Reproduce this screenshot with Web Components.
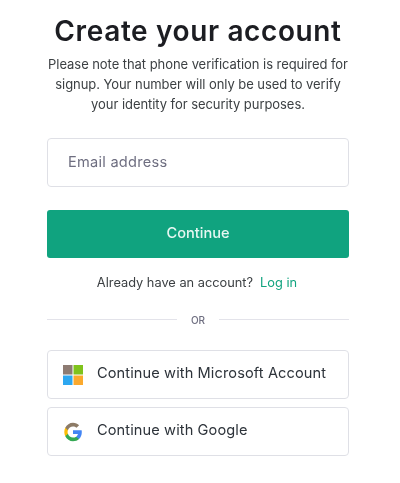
<!DOCTYPE html>
<html lang="en"><head><meta charset="utf-8"><title>Create your account</title>
<style>
html,body{margin:0;padding:0;background:#fff;}
body{font-family:Inter,"Liberation Sans",sans-serif;}
</style></head><body>
<signup-page>
  <auth-header title="Create your account">Please note that phone verification is required for<br>signup. Your number will only be used to verify<br>your identity for security purposes.</auth-header>
  <email-field placeholder="Email address"></email-field>
  <primary-button>Continue</primary-button>
  <login-prompt></login-prompt>
  <or-divider></or-divider>
  <social-button><svg slot="icon" width="20" height="20" viewBox="0 0 20 20"><rect x="0" y="0" width="9.5" height="9.5" fill="#8d7b72"/><rect x="10.5" y="0" width="9.5" height="9.5" fill="#7fc31c"/><rect x="0" y="10.5" width="9.5" height="9.5" fill="#2da7f0"/><rect x="10.5" y="10.5" width="9.5" height="9.5" fill="#fba92d"/></svg>Continue with Microsoft Account</social-button>
  <social-button><svg slot="icon" width="20" height="20" viewBox="0 0 48 48"><path fill="#4285F4" d="M45.1 24.5c0-1.6-.1-3.100-.4-4.500H24v8.500h11.800c-.5 2.750-2.050 5.100-4.400 6.650v5.550h7.100c4.150-3.800 6.600-9.450 6.600-16.200z"/><path fill="#34A853" d="M24 46c5.950 0 10.950-1.950 14.500-5.300l-7.100-5.550c-1.950 1.300-4.450 2.100-7.400 2.100-5.700 0-10.550-3.850-12.300-9H5.400v5.700C8.950 41.050 15.900 46 24 46z"/><path fill="#FBBC05" d="M11.700 28.250c-.45-1.300-.7-2.750-.7-4.250s.25-2.950.7-4.250v-5.700H5.400C3.950 16.850 3.100 20.300 3.100 24s.85 7.150 2.300 9.950z"/><path fill="#8d7b66" d="M24 10.750c3.200 0 6.050 1.100 8.350 3.250l6.300-6.300C34.950 4.200 29.950 2 24 2 15.900 2 8.950 6.950 5.400 14.050l6.300 5.700c1.750-5.150 6.600-9 12.300-9z"/></svg>Continue with Google</social-button>
</signup-page>
<script>
function def(name, css, html){
  customElements.define(name, class extends HTMLElement{
    connectedCallback(){
      if(this.shadowRoot) return;
      const r=this.attachShadow({mode:"open"});
      r.innerHTML=`<style>${css}</style>${typeof html==="function"?html(this):html}`;
    }
  });
}
def("signup-page",`:host{display:flex;flex-direction:column;width:302px;margin:0 auto 0 47px;padding-top:16px;filter:blur(.5px);}`,`<slot></slot>`);
def("auth-header",`:host{display:block;text-align:center;margin:0 -10px;}
h1{margin:0;font:600 28px/30px Inter,"Liberation Sans",sans-serif;color:#1c1d22;letter-spacing:.62px;}
p{margin:8px 0 0;font:400 13px/20px Inter,"Liberation Sans",sans-serif;color:#3c4043;letter-spacing:-.06px;}`,
 e=>`<h1>${e.getAttribute("title")}</h1><p><slot></slot></p>`);
def("email-field",`:host{display:flex;align-items:center;box-sizing:border-box;height:49px;margin-top:24px;padding-left:20px;border:1.5px solid #dfe0e6;border-radius:4px;}
span{padding-bottom:2px;font:400 14.6px Inter,"Liberation Sans",sans-serif;color:#6e6e80;letter-spacing:.25px;}`,
 e=>`<span>${e.getAttribute("placeholder")}</span>`);
def("primary-button",`:host{display:flex;align-items:center;justify-content:center;box-sizing:border-box;height:48px;padding-bottom:2px;margin-top:23px;border-radius:3px;background:#10a37f;color:#e6f7f2;font:500 14.6px Inter,"Liberation Sans",sans-serif;}`,`<slot></slot>`);
def("login-prompt",`:host{display:flex;justify-content:center;gap:7px;margin-top:16px;padding-right:2px;font:400 12.8px/17px Inter,"Liberation Sans",sans-serif;color:#3c4043;}
a{color:#10a37f;text-decoration:none;}`,`<span>Already have an account?</span><a href="#">Log in</a>`);
def("or-divider",`:host{display:flex;align-items:center;gap:14px;margin-top:20px;margin-bottom:22px;height:17px;font:500 10px Inter,"Liberation Sans",sans-serif;color:#6e6e80;}
i{flex:1;height:1.5px;background:#e3e3ea;}`,`<i></i><span>OR</span><i></i>`);
def("social-button",`:host{display:flex;align-items:center;gap:14px;box-sizing:border-box;height:49px;padding-left:15px;border:1.5px solid #dfe0e6;border-radius:4px;margin-bottom:8px;font:400 14.6px Inter,"Liberation Sans",sans-serif;color:#2d333a;letter-spacing:.1px;}
.i{display:flex;width:20px;height:20px;}
.t{padding-bottom:4px;}`,`<span class="i"><slot name="icon"></slot></span><span class="t"><slot></slot></span>`);
</script>
</body></html>
